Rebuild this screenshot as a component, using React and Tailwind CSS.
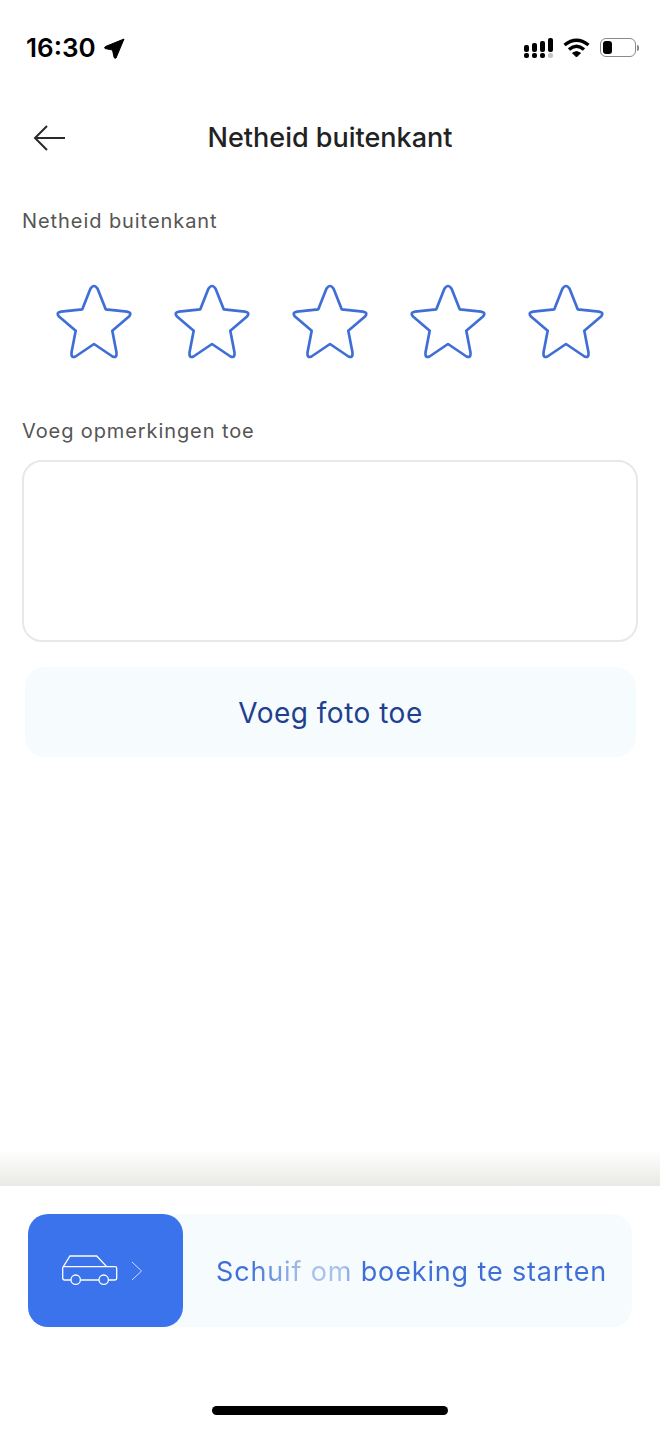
import React from 'react'

const Star = () => (
  <svg width="76" height="74" viewBox="0 0 76 74" fill="none" className="overflow-visible">
    <path
      d="M34.3 4 Q38 -2 41.7 4 L49.7 24.3 L71 26.6 Q76.5 27.5 73 31.5 L56.3 45.7 L60.5 67.5 Q61 73.5 56.5 71.5 L38 59 L19.5 71.5 Q15 73.5 15.5 67.5 L19.7 45.7 L3 31.5 Q-0.5 27.5 5 26.6 L26.3 24.3 Z"
      stroke="#3f6fd6"
      strokeWidth="2.7"
      strokeLinejoin="round"
    />
  </svg>
)

const StatusBar = () => (
  <div className="h-[96px] pl-[26px] pr-[21px] pt-[33px] flex justify-between items-start">
    <div className="flex items-center gap-[8px]">
      <span className="text-[26px] leading-[30px] font-semibold text-black">16:30</span>
      <svg width="21" height="21" viewBox="0 0 21 21" fill="#000">
        <path d="M20 1 L12 20 Q10.5 21 10 19 L8.5 12 L1 10.5 Q0 9 1.5 8.5 Z" stroke="#000" strokeWidth="1" strokeLinejoin="round" />
      </svg>
    </div>
    <div className="flex items-start gap-[10px] pt-[5px]">
      <svg width="29" height="21" viewBox="0 0 29 21">
        <rect x="0" y="7" width="5" height="7" rx="2" fill="#000" />
        <rect x="8" y="5" width="5" height="9" rx="2" fill="#000" />
        <rect x="16" y="3" width="5" height="11" rx="2" fill="#000" />
        <rect x="24" y="0" width="5" height="14" rx="2" fill="#000" />
        <rect x="0" y="15" width="5" height="5" rx="2" fill="#000" />
        <rect x="8" y="15" width="5" height="5" rx="2" fill="#000" />
        <rect x="16" y="15" width="5" height="5" rx="2" fill="#000" />
        <rect x="24" y="15" width="5" height="5" rx="2" fill="#c4c4c4" />
      </svg>
      <svg width="27" height="20" viewBox="0 0 27 20" fill="none" stroke="#000" strokeWidth="3.4">
        <path d="M1.5 7 Q13.5 -2.5 25.5 7" />
        <path d="M6 11.5 Q13.5 5 21 11.5" />
        <path d="M13.5 19 L9.5 15 Q13.5 12 17.5 15 Z" fill="#000" strokeWidth="1" />
      </svg>
      <div className="flex items-center gap-[1px]">
        <div className="w-[36px] h-[19px] rounded-[6px] border-[1.5px] border-[#8a8a8a] p-[2px]">
          <div className="w-[9px] h-full rounded-[3px] bg-black" />
        </div>
        <div className="w-[2px] h-[6px] rounded-r-full bg-[#8a8a8a]" />
      </div>
    </div>
  </div>
)

export default function App() {
  return (
    <div className="w-[660px] h-[1429px] bg-white flex flex-col overflow-hidden font-['Inter',sans-serif]">
      <StatusBar />

      {/* header */}
      <div className="h-[84px] flex items-center justify-center relative">
        <svg width="32" height="26" viewBox="0 0 32 26" fill="none" stroke="#2a2a2a" strokeWidth="2" className="absolute left-[33px] top-[29px]">
          <path d="M14 1 L2 13 L14 25" />
          <path d="M2 13 H32" />
        </svg>
        <h1 className="text-[27px] leading-[32px] font-medium text-[#222]">Netheid buitenkant</h1>
      </div>

      <div className="px-[22px] pt-[29px]">
        <p className="text-[20px] leading-[24px] text-[#555] tracking-[0.93px]">Netheid buitenkant</p>

        <div className="flex justify-between px-[34px] mt-[52px]">
          <Star />
          <Star />
          <Star />
          <Star />
          <Star />
        </div>

        <p className="text-[20px] leading-[24px] text-[#555] tracking-[0.9px] mt-[60px]">Voeg opmerkingen toe</p>

        <div className="h-[182px] mt-[17px] rounded-[20px] border-2 border-[#e8e8e8] bg-white" />

        <button className="w-[611px] h-[90px] ml-[3px] mt-[25px] pt-[2px] rounded-[20px] bg-[#f6fbfe] text-[28px] text-[#1f3f8f] tracking-[0.5px] flex items-center justify-center">
          Voeg foto toe
        </button>
      </div>

      <div className="flex-1" />

      <div className="h-[36px] bg-gradient-to-b from-white to-[#e9e9e4]" />

      {/* bottom slider */}
      <div className="h-[243px] bg-white pt-[28px] px-[28px] flex flex-col">
        <div className="w-[604px] h-[113px] rounded-[20px] bg-[#f6fbfe] flex items-center">
          <div className="w-[155px] h-full rounded-[20px] bg-[#3b73ec] flex items-center pl-[34px] gap-[13px]">
            <svg width="56" height="31" viewBox="0 0 56 31" fill="none" stroke="#fff" strokeWidth="1.3">
              <path d="M9 25 H2.5 Q0.7 25 0.7 23 V12.7 L8 1 H34.7 L44.7 11.7 H53 Q54.7 11.7 54.7 13.5 V23.3 Q54.7 25 53 25 H46.5 M37 25 H18.4 M2 11.7 H44.7" />
              <circle cx="13.7" cy="24.7" r="4.7" />
              <circle cx="41.7" cy="24.7" r="4.7" />
            </svg>
            <svg width="12" height="20" viewBox="0 0 12 20" fill="none" stroke="#fff" strokeOpacity="0.75" strokeWidth="1">
              <path d="M1 1 L10.5 10 L1 19" />
            </svg>
          </div>
          <span className="ml-[33px] mt-[2px] text-[27px] leading-[34px] tracking-[0.85px] whitespace-nowrap bg-[linear-gradient(90deg,#3f6fd6_0%,#3f6fd6_8%,#a9bfec_22%,#a9bfec_33%,#3f6fd6_37%,#3f6fd6_100%)] bg-clip-text text-transparent">
            Schuif om boeking te starten
          </span>
        </div>
        <div className="w-[236px] h-[9px] mx-auto mt-[79px] rounded-full bg-black" />
      </div>
    </div>
  )
}
